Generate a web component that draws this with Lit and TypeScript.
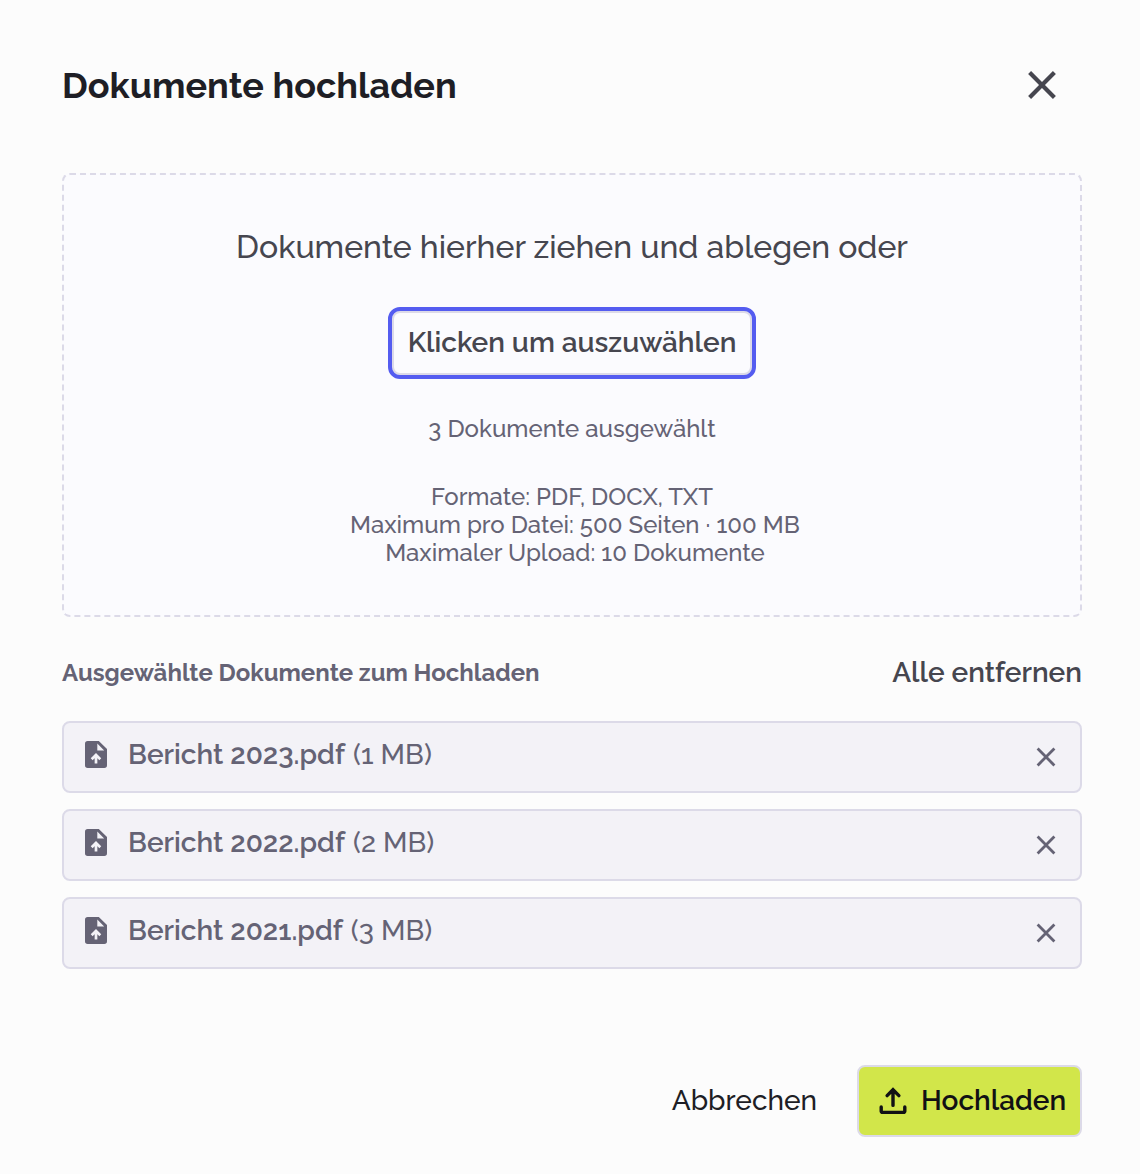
import { LitElement, html, css } from "lit";
import { customElement, state } from "lit/decorators.js";

interface UploadDoc {
  name: string;
  size: string;
}

const closeIcon = html`<svg class="close-icon" viewBox="0 0 32 32" aria-hidden="true">
  <path d="M3.6 3.6 28.4 28.4M28.4 3.6 3.6 28.4" />
</svg>`;

const smallCloseIcon = html`<svg class="small-close-icon" viewBox="0 0 24 24" aria-hidden="true">
  <path d="M3.6 3.6 20.4 20.4M20.4 3.6 3.6 20.4" />
</svg>`;

const fileIcon = html`<svg class="file-icon" viewBox="0 0 22 27" aria-hidden="true">
  <path
    fill="currentColor"
    fill-rule="evenodd"
    d="M2.7 0H13.8L22 8.1V24.3a2.7 2.7 0 0 1-2.7 2.7H2.7A2.7 2.7 0 0 1 0 24.3V2.7A2.7 2.7 0 0 1 2.7 0ZM12.3 2.6V9.5H19.2Z"
  />
  <path class="file-arrow" d="M11 22.6V14.6M6.7 18.2 11 13.9 15.3 18.2" />
</svg>`;

const uploadIcon = html`<svg class="upload-icon" viewBox="0 0 28 28" aria-hidden="true">
  <path d="M14 18.4V3.6M8.1 8.6 14 2.7 19.9 8.6M2.2 20V24.2a1.2 1.2 0 0 0 1.2 1.2H24.6a1.2 1.2 0 0 0 1.2-1.2V20" />
</svg>`;

@customElement("app-root")
export class AppRoot extends LitElement {
  @state() private docs: UploadDoc[] = [
    { name: "Bericht 2023.pdf", size: "(1 MB)" },
    { name: "Bericht 2022.pdf", size: "(2 MB)" },
    { name: "Bericht 2021.pdf", size: "(3 MB)" },
  ];

  static styles = css`
    :host {
      display: block;
      box-sizing: border-box;
      height: 1174px;
      padding: 61px 58px 37px 62px;
      background: #fcfcfc;
      color: #656375;
      font-family: Raleway, Lato, sans-serif;
    }
    * { box-sizing: border-box; }
    button {
      margin: 0;
      padding: 0;
      border: 0;
      background: none;
      color: inherit;
      font: inherit;
      cursor: pointer;
    }
    svg { display: block; flex: none; fill: none; stroke: none; }
    .header {
      display: flex;
      justify-content: space-between;
      align-items: center;
      height: 48px;
      padding-right: 24px;
    }
    h1 {
      margin: 0;
      color: #1e1e25;
      font-size: 36px;
      font-weight: 700;
      line-height: 46px;
    }
    .header button { color: #46464f; }
    .close-icon { width: 32px; height: 32px; }
    .close-icon path { stroke: currentColor; stroke-width: 4.2; }
    .dropzone {
      display: flex;
      flex-direction: column;
      align-items: center;
      width: 1020px;
      height: 444px;
      margin-top: 64px;
      padding-top: 52px;
      border: 2px dashed #dcdae8;
      border-radius: 8px;
      background: #fbfbfe;
      text-align: center;
    }
    .lead {
      color: #46464f;
      font-size: 32px;
      font-weight: 500;
      line-height: 40px;
    }
    .select {
      width: 360px;
      height: 64px;
      margin-top: 44px;
      padding-bottom: 2px;
      border: 2px solid #dcdae8;
      border-radius: 8px;
      outline: 4px solid #545cf0;
      color: #46464f;
      font-size: 28px;
      font-weight: 600;
      white-space: nowrap;
    }
    .count, .limits { font-size: 24px; line-height: 28px; font-weight: 500; }
    .count { margin-top: 40px; }
    .limits { margin-top: 40px; }
    .per-file, .max { padding-left: 6px; }
    .list-head {
      display: flex;
      justify-content: space-between;
      align-items: center;
      width: 1020px;
      height: 36px;
      margin-top: 37px;
    }
    h2 {
      margin: 0;
      padding-top: 2px;
      font-size: 24px;
      font-weight: 700;
      line-height: 34px;
    }
    .remove-all {
      padding-top: 2px;
      color: #46464f;
      font-size: 28px;
      font-weight: 600;
      line-height: 34px;
    }
    .list {
      display: flex;
      flex-direction: column;
      gap: 16px;
      width: 1020px;
      margin: 31px 0 0;
      padding: 0;
      list-style: none;
    }
    .row {
      display: flex;
      align-items: center;
      height: 72px;
      padding: 0 22px 0 21px;
      border: 2px solid #dcdae8;
      border-radius: 8px;
      background: #f3f2f7;
    }
    .file-icon { width: 22px; height: 27px; margin-bottom: 5px; }
    .file-arrow { stroke: #f3f2f7; stroke-width: 2.7; }
    .label {
      flex: 1;
      padding: 0 0 5px 21px;
      font-size: 28px;
      font-weight: 500;
      line-height: 34px;
    }
    .name { margin-right: 1px; font-weight: 600; }
    .small-close-icon { width: 24px; height: 24px; }
    .small-close-icon path { stroke: currentColor; stroke-width: 2.8; }
    .footer {
      display: flex;
      justify-content: flex-end;
      gap: 40px;
      width: 1020px;
      margin-top: 96px;
      font-size: 28px;
      font-weight: 500;
      line-height: 34px;
    }
    .cancel { color: #1e1e25; }
    .upload {
      display: flex;
      align-items: center;
      gap: 14px;
      width: 225px;
      height: 72px;
      padding-left: 20px;
      border: 2px solid #dcdae8;
      border-radius: 8px;
      background: #d2e64a;
      color: #111114;
      font-weight: 600;
      white-space: nowrap;
    }
    .upload-icon { width: 28px; height: 28px; }
    .upload-icon path { stroke: currentColor; stroke-width: 3.4; stroke-linecap: round; }
  `;

  private remove(doc: UploadDoc) {
    this.docs = this.docs.filter((d) => d !== doc);
  }

  render() {
    return html`
      <header class="header">
        <h1>Dokumente hochladen</h1>
        <button>${closeIcon}</button>
      </header>
      <section class="dropzone">
        <div class="lead">Dokumente hierher ziehen und ablegen oder</div>
        <button class="select">Klicken um auszuwählen</button>
        <div class="count">${this.docs.length} Dokumente ausgewählt</div>
        <div class="limits">
          <div class="formats">Formate: PDF, DOCX, TXT</div>
          <div class="per-file">Maximum pro Datei: 500 Seiten · 100 MB</div>
          <div class="max">Maximaler Upload: 10 Dokumente</div>
        </div>
      </section>
      <div class="list-head">
        <h2>Ausgewählte Dokumente zum Hochladen</h2>
        <button class="remove-all" @click=${() => (this.docs = [])}>Alle entfernen</button>
      </div>
      <ul class="list">
        ${this.docs.map(
          (doc) => html`<li class="row">
            ${fileIcon}
            <div class="label"><span class="name">${doc.name}</span> ${doc.size}</div>
            <button @click=${() => this.remove(doc)}>${smallCloseIcon}</button>
          </li>`
        )}
      </ul>
      <footer class="footer">
        <button class="cancel">Abbrechen</button>
        <button class="upload">${uploadIcon}<span>Hochladen</span></button>
      </footer>
    `;
  }
}
